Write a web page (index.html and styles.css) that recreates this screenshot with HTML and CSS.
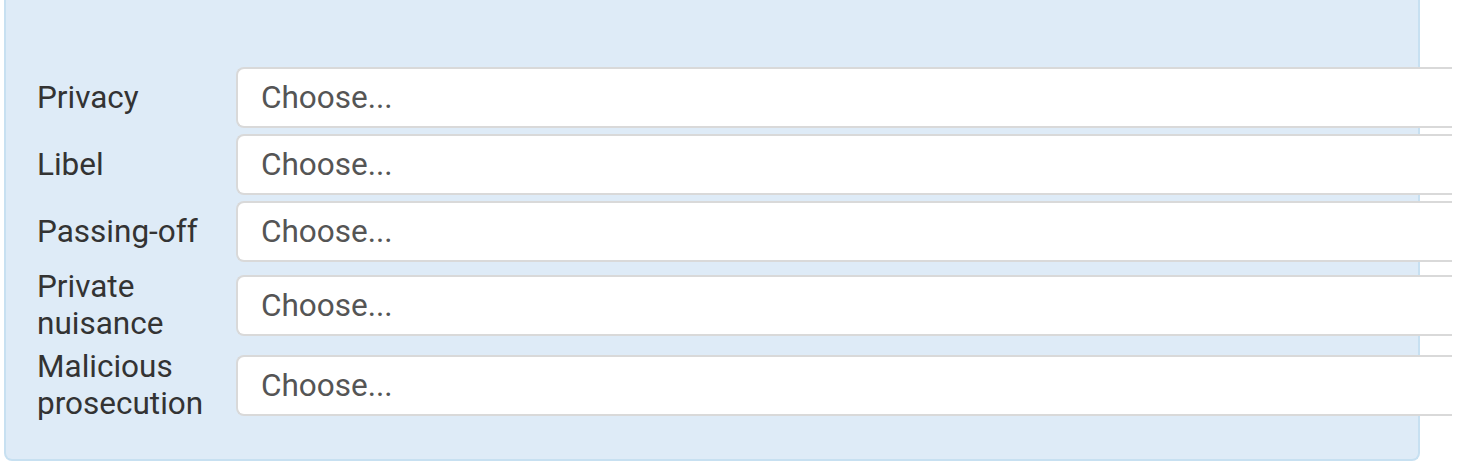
FILE: index.html
```html
<!DOCTYPE html>
<html lang="en">
<head>
<meta charset="utf-8">
<title>Torts</title>
<link rel="stylesheet" href="styles.css">
</head>
<body>
<div class="panel">
  <div class="form">
    <div class="row">
      <label class="label" for="f1">Privacy</label>
      <select class="choice" id="f1"><option>Choose...</option></select>
    </div>
    <div class="row">
      <label class="label" for="f2">Libel</label>
      <select class="choice" id="f2"><option>Choose...</option></select>
    </div>
    <div class="row">
      <label class="label" for="f3">Passing-off</label>
      <select class="choice" id="f3"><option>Choose...</option></select>
    </div>
    <div class="row">
      <label class="label" for="f4">Private<br>nuisance</label>
      <select class="choice" id="f4"><option>Choose...</option></select>
    </div>
    <div class="row">
      <label class="label" for="f5">Malicious<br>prosecution</label>
      <select class="choice" id="f5"><option>Choose...</option></select>
    </div>
  </div>
</div>
</body>
</html>
```
FILE: styles.css
```css
html, body {
  margin: 0;
  padding: 0;
  background: #ffffff;
}

body {
  font-family: Roboto, "Liberation Sans", sans-serif;
}

.panel {
  box-sizing: border-box;
  margin-left: 4px;
  width: 1416px;
  background: #deebf7;
  border: 2px solid #c7e0f1;
  border-top: none;
  border-radius: 0 0 8px 8px;
  padding: 67px 0 37px 31px;
}

.form {
  display: flex;
  flex-direction: column;
  gap: 6px;
}

.row {
  display: flex;
  align-items: center;
}

.label {
  width: 199px;
  flex: none;
  font-size: 31.5px;
  line-height: 37px;
  color: #333333;
}

.choice {
  appearance: none;
  -webkit-appearance: none;
  box-sizing: border-box;
  flex: none;
  width: 1216px;
  height: 61px;
  margin: 0;
  padding: 0 0 0 23px;
  background: #ffffff;
  border: 2px solid #d9d9d9;
  border-right: none;
  border-radius: 8px 0 0 8px;
  font-family: Roboto, "Liberation Sans", sans-serif;
  font-size: 31.5px;
  color: #555555;
  outline: none;
}
```
